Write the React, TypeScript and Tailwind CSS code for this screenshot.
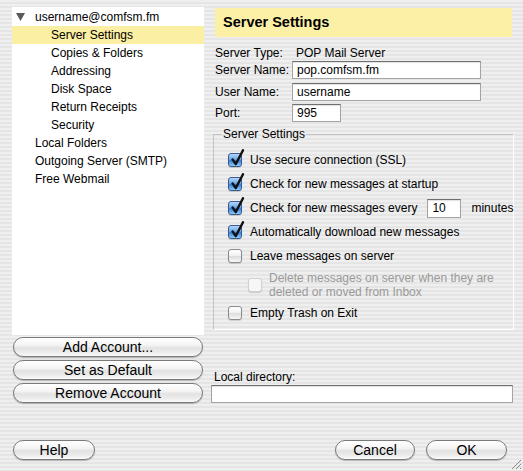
import React from 'react';

const font = 'font-["Liberation_Sans",Arial,sans-serif]';

function AquaButton({ children, className = '' }: { children: React.ReactNode; className?: string }) {
  return (
    <button
      className={`h-[20px] rounded-full border border-[#7a7a7a] bg-[image:linear-gradient(to_bottom,#ffffff_0%,#f4f4f4_40%,#e2e2e2_55%,#ececec_80%,#fbfbfb_100%)] shadow-[0_1px_1px_rgba(0,0,0,0.25)] text-[14px] leading-[18px] text-black ${className}`}
    >
      {children}
    </button>
  );
}

function AquaField({ value = '', className = '' }: { value?: string; className?: string }) {
  return (
    <div
      className={`h-[18px] shrink-0 bg-white border border-[#a3a3a3] border-t-[#707070] shadow-[inset_0_1px_1px_rgba(0,0,0,0.12)] pl-[4px] text-[12px] leading-[16px] text-black ${className}`}
    >
      {value}
    </div>
  );
}

function AquaCheck({ checked, disabled }: { checked?: boolean; disabled?: boolean }) {
  const skin = checked
    ? 'border-[#3a5a92] bg-[image:linear-gradient(to_bottom,#b5d6f8_0%,#6aa8ec_45%,#3580dc_55%,#8cc8f8_100%)]'
    : disabled
      ? 'border-[#d0d0d0] bg-[#f7f7f7]'
      : 'border-[#8a8a8a] bg-[image:linear-gradient(to_bottom,#ffffff_0%,#f2f2f2_45%,#dddddd_55%,#f8f8f8_100%)]';
  return (
    <span className={`relative inline-block w-[14px] h-[14px] rounded-[3px] border shrink-0 shadow-[0_1px_1px_rgba(0,0,0,0.15)] ${skin}`}>
      {checked && (
        <svg className="absolute left-[1px] top-[-5px]" width="15" height="18" viewBox="0 0 15 18">
          <path d="M2.6 10.5 L5.8 15 L13 1.2" fill="none" stroke="#111" strokeWidth="2.4" strokeLinecap="round" strokeLinejoin="round" />
        </svg>
      )}
    </span>
  );
}

export default function App() {
  const children = ['Server Settings', 'Copies & Folders', 'Addressing', 'Disk Space', 'Return Receipts', 'Security'];
  const others = ['Local Folders', 'Outgoing Server (SMTP)', 'Free Webmail'];

  return (
    <div
      className={`relative w-[523px] h-[471px] overflow-hidden flex flex-col pt-[7px] text-black bg-[image:repeating-linear-gradient(to_bottom,#efefef_0px,#efefef_2px,#e5e5e5_2px,#e5e5e5_4px)] ${font}`}
    >
      <div className="flex">
        {/* account tree + account buttons */}
        <div className="ml-[12px] w-[192px] flex flex-col">
          <div className="h-[328px] bg-white pt-[1px] text-[12px]">
            <div className="h-[18px] leading-[18px] flex items-center">
              <svg className="ml-[4px] mr-[10px]" width="9" height="8" viewBox="0 0 9 8">
                <path d="M0 0 H9 L4.5 8 Z" fill="#5a5a5a" />
              </svg>
              <span>username@comfsm.fm</span>
            </div>
            {children.map((c, i) => (
              <div
                key={c}
                className={`h-[18px] leading-[18px] pl-[39px] ${i === 0 ? 'bg-[#fbefa3]' : ''}`}
              >
                {c}
              </div>
            ))}
            {others.map((c) => (
              <div key={c} className="h-[18px] leading-[18px] pl-[23px]">
                {c}
              </div>
            ))}
          </div>
          <div className="mt-[2px] ml-[1px] flex flex-col gap-[3px]">
            <AquaButton className="w-[190px]">Add Account...</AquaButton>
            <AquaButton className="w-[190px]">Set as Default</AquaButton>
            <AquaButton className="w-[190px]">Remove Account</AquaButton>
          </div>
        </div>

        {/* settings pane */}
        <div className="ml-[7px] w-[302px] flex flex-col text-[12px]">
          <div className="ml-[4px] mt-[1px] w-[297px] h-[29px] bg-[#fcf0a6] pl-[8px] flex items-center text-[14.5px] font-bold">
            Server Settings
          </div>

          <div className="mt-[8px] h-[16px] flex items-center">
            <span className="w-[81px] pl-[4px]">Server Type:</span>
            <span className="pl-[4px]">POP Mail Server</span>
          </div>
          <div className="flex items-center">
            <span className="w-[81px] pl-[4px]">Server Name:</span>
            <AquaField value="pop.comfsm.fm" className="w-[189px]" />
          </div>
          <div className="mt-[4px] flex items-center">
            <span className="w-[81px] pl-[4px]">User Name:</span>
            <AquaField value="username" className="w-[189px]" />
          </div>
          <div className="mt-[3px] flex items-center">
            <span className="w-[81px] pl-[4px]">Port:</span>
            <AquaField value="995" className="w-[49px]" />
          </div>

          <fieldset className="mt-[5px] ml-[2px] w-[300px] m-0 p-0 border border-[#c4c4c4] border-b-white border-r-white pb-[6px] whitespace-nowrap">
            <legend className="ml-[8px] px-[1px] h-[14px] leading-[14px]">Server Settings</legend>
            <div className="pt-[7px] pl-[14px] flex flex-col">
              <div className="h-[24px] flex items-center gap-[8px]">
                <AquaCheck checked />
                <span>Use secure connection (SSL)</span>
              </div>
              <div className="h-[24px] flex items-center gap-[8px]">
                <AquaCheck checked />
                <span>Check for new messages at startup</span>
              </div>
              <div className="h-[24px] flex items-center">
                <AquaCheck checked />
                <span className="ml-[8px] shrink-0">Check for new messages every</span>
                <AquaField value="10" className="ml-[10px] w-[34px] h-[19px] leading-[17px]" />
                <span className="ml-[10px] shrink-0">minutes</span>
              </div>
              <div className="h-[24px] flex items-center gap-[8px]">
                <AquaCheck checked />
                <span>Automatically download new messages</span>
              </div>
              <div className="h-[24px] flex items-center gap-[8px]">
                <AquaCheck />
                <span>Leave messages on server</span>
              </div>
              <div className="mt-[3px] pl-[20px] flex items-center gap-[7px] text-[#9a9a9a]">
                <AquaCheck disabled />
                <span className="leading-[14px]">
                  Delete messages on server when they are
                  <br />
                  deleted or moved from Inbox
                </span>
              </div>
              <div className="mt-[4px] h-[20px] flex items-center gap-[8px]">
                <AquaCheck />
                <span>Empty Trash on Exit</span>
              </div>
            </div>
          </fieldset>

          <div className="mt-[40px] pl-[3px] h-[14px] leading-[14px]">Local directory:</div>
          <AquaField className="mt-[1px] w-[302px]" />
        </div>
      </div>

      <div className="mt-[37px] flex items-center">
        <AquaButton className="ml-[13px] w-[82px]">Help</AquaButton>
        <AquaButton className="ml-auto w-[80px]">Cancel</AquaButton>
        <AquaButton className="ml-[11px] mr-[16px] w-[81px]">OK</AquaButton>
      </div>

      <svg className="absolute right-[1px] bottom-[1px]" width="11" height="11" viewBox="0 0 11 11">
        <path d="M1 10 L10 1 M5 10 L10 5 M9 10 L10 9" stroke="#8a8a8a" strokeWidth="1" />
      </svg>
    </div>
  );
}
